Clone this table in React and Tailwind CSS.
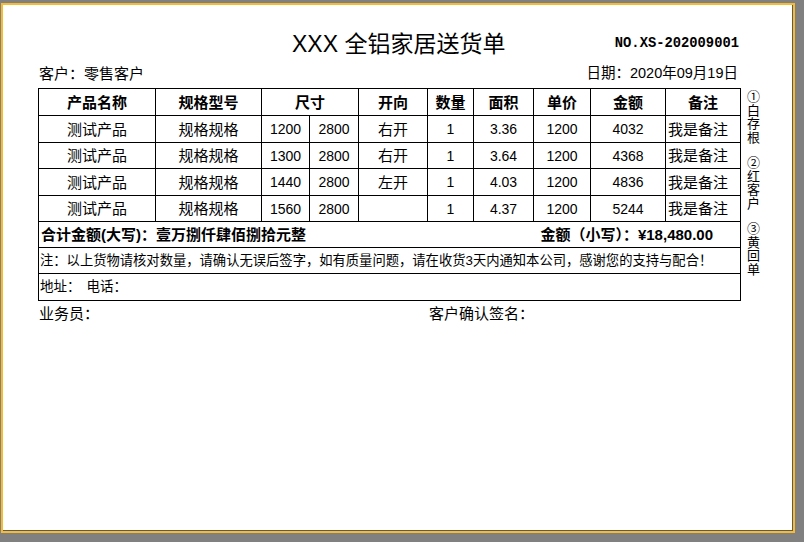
import React from "react";

const rows = [
  { name: "测试产品", spec: "规格规格", w: "1200", h: "2800", dir: "右开", qty: "1", area: "3.36", price: "1200", amount: "4032", note: "我是备注" },
  { name: "测试产品", spec: "规格规格", w: "1300", h: "2800", dir: "右开", qty: "1", area: "3.64", price: "1200", amount: "4368", note: "我是备注" },
  { name: "测试产品", spec: "规格规格", w: "1440", h: "2800", dir: "左开", qty: "1", area: "4.03", price: "1200", amount: "4836", note: "我是备注" },
  { name: "测试产品", spec: "规格规格", w: "1560", h: "2800", dir: "", qty: "1", area: "4.37", price: "1200", amount: "5244", note: "我是备注" },
];

const rowHeights = ["h-[27px]", "h-[26px]", "h-[27px]", "h-[26px]"];

const SideLabel = ({ chars }) => (
  <div className="flex flex-col items-center text-[13px] leading-[13.5px]">
    {chars.map((c, i) => (
      <span key={i}>{c}</span>
    ))}
  </div>
);

const App = () => {
  const cell = "border border-black p-0 text-center";
  const num = "text-[14px]";
  return (
    <div
      className="w-[804px] h-[542px] bg-[#808080] overflow-hidden pt-[3px] pl-[1px]"
      style={{ fontFamily: '"Liberation Sans", "Noto Sans CJK SC", sans-serif' }}
    >
      <div className="w-[794px] h-[530px] border-2 border-[#f8bb30]">
        <div className="w-full h-full bg-white border-r border-b border-[#5a5a5a] pl-[35px] pt-[24px] text-black">
          {/* title */}
          <div className="h-[30px] w-[702px] flex items-center">
            <h1 className="ml-[254px] text-[23px] leading-none font-normal">XXX 全铝家居送货单</h1>
            <span
              className="ml-auto mr-[1px] text-[13.8px] font-bold"
              style={{ fontFamily: '"Liberation Mono", monospace' }}
            >
              NO.XS-202009001
            </span>
          </div>

          <div className="mt-[5px] h-[18px] w-[702px] flex items-center justify-between text-[15px] leading-none">
            <span className="ml-[1px]">客户：零售客户</span>
            <span className="mr-[2px] text-[14.5px]">日期：2020年09月19日</span>
          </div>

          <div className="mt-[6px] flex">
            <table className="border-collapse table-fixed w-[702px] text-[15px] leading-none">
              <colgroup>
                <col className="w-[117px]" />
                <col className="w-[106px]" />
                <col className="w-[48px]" />
                <col className="w-[49px]" />
                <col className="w-[69px]" />
                <col className="w-[46px]" />
                <col className="w-[60px]" />
                <col className="w-[57px]" />
                <col className="w-[75px]" />
                <col className="w-[75px]" />
              </colgroup>
              <tbody>
                <tr className="h-[27px] font-bold">
                  <td className={cell}>产品名称</td>
                  <td className={cell}>规格型号</td>
                  <td className={cell} colSpan={2}>尺寸</td>
                  <td className={cell}>开向</td>
                  <td className={cell}>数量</td>
                  <td className={cell}>面积</td>
                  <td className={cell}>单价</td>
                  <td className={cell}>金额</td>
                  <td className={cell}>备注</td>
                </tr>
                {rows.map((r, i) => (
                  <tr key={i} className={rowHeights[i]}>
                    <td className={cell}>{r.name}</td>
                    <td className={cell}>{r.spec}</td>
                    <td className={`${cell} ${num}`}>{r.w}</td>
                    <td className={`${cell} ${num}`}>{r.h}</td>
                    <td className={cell}>{r.dir}</td>
                    <td className={`${cell} ${num}`}>{r.qty}</td>
                    <td className={`${cell} ${num}`}>{r.area}</td>
                    <td className={`${cell} ${num}`}>{r.price}</td>
                    <td className={`${cell} ${num}`}>{r.amount}</td>
                    <td className="border border-black p-0 pl-[2px] text-left">{r.note}</td>
                  </tr>
                ))}
                <tr className="h-[26px]">
                  <td className="border border-black p-0 px-[2px]" colSpan={10}>
                    <div className="flex items-center justify-between font-bold">
                      <span>合计金额(大写)：壹万捌仟肆佰捌拾元整</span>
                      <span className="mr-[25px]">金额（小写）：¥18,480.00</span>
                    </div>
                  </td>
                </tr>
                <tr className="h-[26px]">
                  <td className="border border-black p-0 pl-[1px] text-[13.3px]" colSpan={10}>
                    注：以上货物请核对数量，请确认无误后签字，如有质量问题，请在收货3天内通知本公司，感谢您的支持与配合！
                  </td>
                </tr>
                <tr className="h-[27px]">
                  <td className="border border-black p-0 pl-[1px] text-[13.5px]" colSpan={10}>
                    地址：<span className="ml-[6px]">电话：</span>
                  </td>
                </tr>
              </tbody>
            </table>

            <div className="ml-[6px] pt-[2px] flex flex-col gap-[12px]">
              <SideLabel chars={["①", "白", "存", "根"]} />
              <SideLabel chars={["②", "红", "客", "户"]} />
              <SideLabel chars={["③", "黄", "回", "单"]} />
            </div>
          </div>

          <div className="mt-[3px] h-[18px] w-[702px] flex items-center text-[15px] leading-none">
            <span className="ml-[1px]">业务员：</span>
            <span className="ml-[330px]">客户确认签名：</span>
          </div>
        </div>
      </div>
    </div>
  );
};

export default App;
